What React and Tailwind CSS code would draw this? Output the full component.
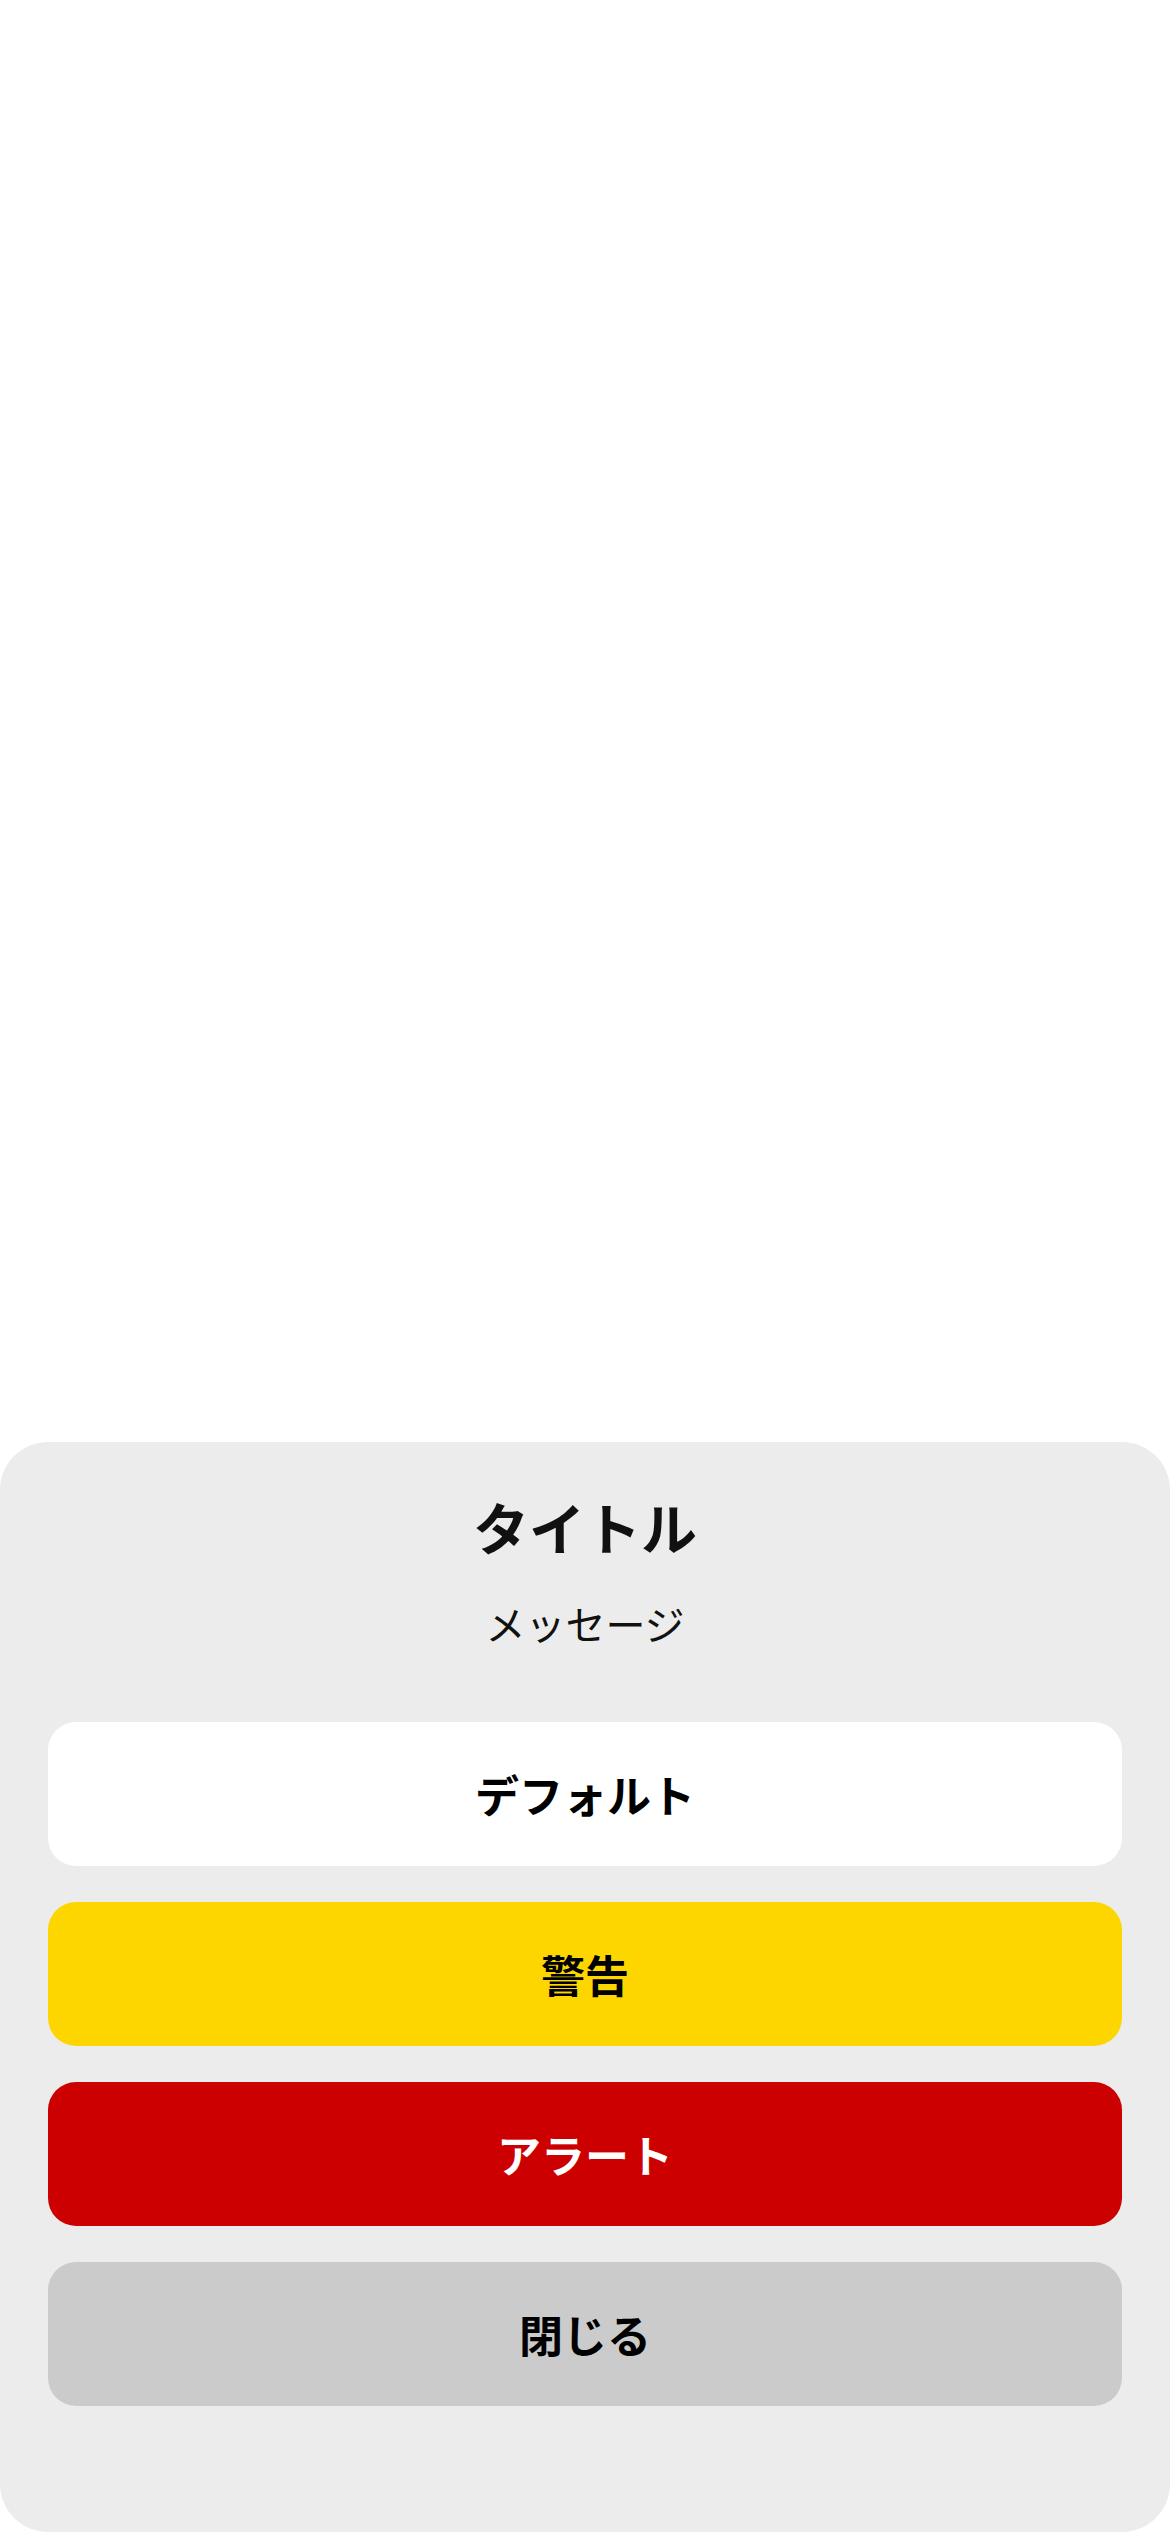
import React from 'react';

const buttons = [
  { label: 'デフォルト', className: 'bg-white text-black' },
  { label: '警告', className: 'bg-[#fdd600] text-black' },
  { label: 'アラート', className: 'bg-[#cc0000] text-white' },
  { label: '閉じる', className: 'bg-[#cbcbcb] text-black' },
];

function App() {
  return (
    <div className="min-h-[2532px] w-[1170px] bg-white flex flex-col justify-end font-['Noto_Sans_CJK_JP',sans-serif]">
      {/* Action sheet */}
      <div className="bg-[#ececec] rounded-t-[48px] rounded-b-[48px] pt-[50px] pb-[126px] px-[48px]">
        <h1 className="text-center text-[56px] leading-[67px] font-bold text-[#111]">タイトル</h1>
        <p className="mt-[40px] text-center text-[40px] leading-[48px] text-[#111]">メッセージ</p>
        <div className="mt-[75px] flex flex-col gap-[36px]">
          {buttons.map((b) => (
            <button
              key={b.label}
              className={`h-[144px] w-full rounded-[28px] flex items-center justify-center text-[44px] font-bold ${b.className}`}
            >
              {b.label}
            </button>
          ))}
        </div>
      </div>
    </div>
  );
}

export default App;
